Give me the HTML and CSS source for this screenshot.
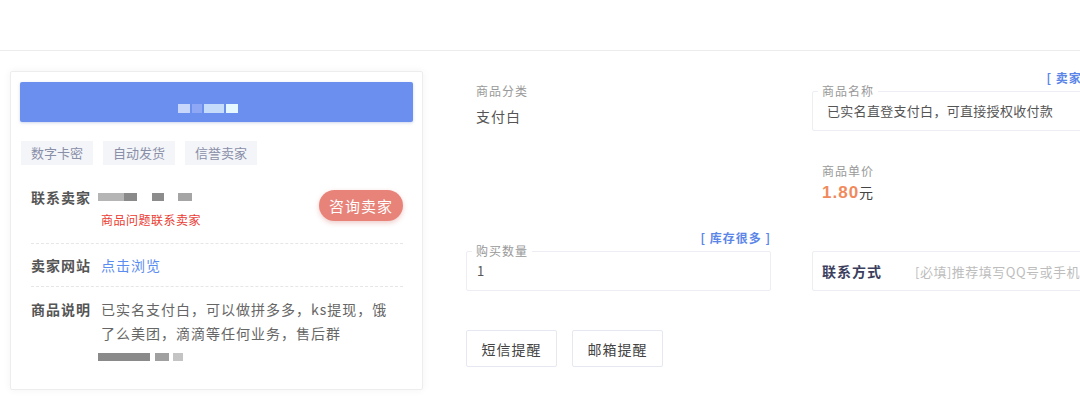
FILE: index.html
```html
<!DOCTYPE html>
<html lang="zh-CN">
<head>
<meta charset="utf-8">
<title>商品详情</title>
<link rel="stylesheet" href="styles.css">
</head>
<body>
<header class="topbar"></header>
<main class="main">
  <section class="card">
    <div class="card-title"><span class="blur-title"><i class="bt1"></i><i class="bt2"></i><i class="bt3"></i><i class="bt4"></i></span></div>
    <div class="tags">
      <span class="tag">数字卡密</span>
      <span class="tag">自动发货</span>
      <span class="tag">信誉卖家</span>
    </div>
    <div class="row row-contact">
      <span class="row-label">联系卖家</span>
      <div class="row-value">
        <div class="blur-line"><i class="b1"></i><i class="b2"></i><i class="b3"></i><i class="b4"></i></div>
        <div class="warn">商品问题联系卖家</div>
      </div>
      <button class="ask-btn">咨询卖家</button>
    </div>
    <div class="row row-site">
      <span class="row-label">卖家网站</span>
      <a class="link">点击浏览</a>
    </div>
    <div class="row row-desc">
      <span class="row-label">商品说明</span>
      <div class="desc">
        <p>已实名支付白，可以做拼多多，ks提现，饿了么美团，滴滴等任何业务，售后群</p>
        <div class="blur-line blur-desc"><i class="d1"></i><i class="d2"></i><i class="d3"></i></div>
      </div>
    </div>
  </section>

  <section class="form">
    <div class="cell cell-cat">
      <div class="f-label">商品分类</div>
      <div class="f-value">支付白</div>
    </div>
    <div class="cell cell-name">
      <div class="hint">[ 卖家信息 ]</div>
      <fieldset class="box">
        <legend>商品名称</legend>
        <div class="box-value name-value">已实名直登支付白，可直接授权收付款</div>
      </fieldset>
      <div class="price-block">
        <div class="f-label">商品单价</div>
        <div class="price"><span class="num">1.80</span><span class="unit">元</span></div>
      </div>
    </div>
    <div class="cell cell-qty">
      <div class="hint">[ 库存很多 ]</div>
      <fieldset class="box">
        <legend>购买数量</legend>
        <div class="box-value qty-value">1</div>
      </fieldset>
    </div>
    <div class="cell cell-contact">
      <div class="contact-box">
        <span class="contact-label">联系方式</span>
        <span class="placeholder">[必填]推荐填写QQ号或手机号</span>
      </div>
    </div>
    <div class="cell cell-btns">
      <button class="ghost-btn">短信提醒</button>
      <button class="ghost-btn">邮箱提醒</button>
    </div>
  </section>
</main>
</body>
</html>
```

FILE: styles.css
```css
* { box-sizing: border-box; }
html, body {
  margin: 0;
  padding: 0;
  background: #fff;
  overflow: hidden;
}
body {
  width: 1080px;
  height: 397px;
  font-family: "Noto Sans CJK SC", "Noto Sans", "Liberation Sans", sans-serif;
  color: #555;
}
.topbar {
  height: 51px;
  border-bottom: 1px solid #ececec;
}
.main {
  display: flex;
  align-items: flex-start;
  gap: 43px;
  padding: 20px 0 0 10px;
  width: 1200px;
}

/* left card */
.card {
  width: 413px;
  flex: none;
  border: 1px solid #ededed;
  border-radius: 2px;
  box-shadow: 0 0 8px rgba(0, 0, 0, 0.05);
  padding: 10px 9px 20px 9px;
}
.card-title {
  height: 40px;
  background: #6b8fee;
  border-radius: 2px;
  box-shadow: 0 1px 3px rgba(60, 90, 180, 0.25);
  display: flex;
  align-items: center;
  justify-content: center;
}
.blur-title {
  display: flex;
  align-items: flex-end;
  gap: 2px;
  height: 22px;
  margin-left: -18px;
  filter: blur(0.6px);
}
.blur-title i { display: block; height: 9px; }
.bt1 { width: 12px; background: #c9d6fb; }
.bt2 { width: 10px; background: #8fa8f5; }
.bt3 { width: 20px; background: #c6dcfb; }
.bt4 { width: 12px; background: #e6f8ff; }

.tags {
  display: flex;
  gap: 10px;
  margin-top: 19px;
  padding-left: 1px;
}
.tag {
  height: 24px;
  line-height: 24px;
  padding: 0 10px;
  background: #f3f5f9;
  color: #8a8fa8;
  font-size: 13px;
}

.row {
  display: flex;
  align-items: flex-start;
  margin: 0 10px 0 11px;
  font-size: 14px;
  line-height: 20px;
}
.row-label {
  width: 70px;
  flex: none;
  font-weight: 700;
  color: #555;
  letter-spacing: 1px;
}
.row-contact {
  padding: 22px 0 14px;
  border-bottom: 1px dashed #e6e6e6;
}
.row-value { flex: 1; }
.blur-line {
  display: flex;
  align-items: center;
  height: 20px;
  margin-left: -3px;
  filter: blur(0.5px);
}
.blur-line i { display: block; height: 8px; }
.b1 { width: 26px; background: #b5b5b5; margin-right: 0; }
.b2 { width: 13px; background: #8a8a8a; margin-right: 15px; }
.b3 { width: 12px; background: #8c8c8c; margin-right: 14px; }
.b4 { width: 14px; background: #a5a5a5; }
.warn {
  margin-top: 4px;
  font-size: 12px;
  line-height: 18px;
  color: #ea3b32;
  letter-spacing: 0.5px;
}
.ask-btn {
  flex: none;
  margin-top: 3px;
  width: 84px;
  height: 31px;
  border: 0;
  border-radius: 16px;
  background: #e8837a;
  color: #fff;
  font-family: inherit;
  font-size: 15px;
  letter-spacing: 1px;
  box-shadow: 0 2px 5px rgba(200, 90, 80, 0.3);
  padding: 0;
}
.row-site {
  padding: 11px 0 11px;
  border-bottom: 1px dashed #e6e6e6;
}
.link {
  color: #5b8cef;
  letter-spacing: 1px;
  cursor: pointer;
}
.row-desc {
  padding-top: 10px;
  line-height: 24px;
}
.desc {
  flex: 1;
  color: #666;
  letter-spacing: 1px;
}
.desc p { margin: 0; padding-right: 10px; }
.blur-desc { height: 24px; margin-left: -3px; }
.d1 { width: 52px; background: #8a8a8a; margin-right: 5px; }
.d2 { width: 14px; background: #a0a0a0; margin-right: 4px; }
.d3 { width: 10px; background: #c4c4c4; }

/* right form */
.form {
  display: grid;
  grid-template-columns: 305px 305px;
  column-gap: 41px;
  flex: none;
}
.f-label {
  font-size: 12px;
  line-height: 18px;
  color: #999;
  letter-spacing: 1px;
}
.f-value {
  margin-top: 6px;
  font-size: 14px;
  line-height: 20px;
  color: #555;
  letter-spacing: 1px;
}
.cell-cat { padding: 11px 0 0 10px; }
.hint {
  text-align: right;
  font-size: 12px;
  line-height: 14px;
  color: #5b86e8;
  font-weight: 700;
  letter-spacing: 1px;
  white-space: nowrap;
}
.box {
  margin: 0;
  padding: 0 5px 9px;
  border: 1px solid #eceef3;
  border-radius: 2px;
  min-width: 0;
}
.box legend {
  padding: 0 4px;
  font-size: 12px;
  line-height: 12px;
  color: #999;
  letter-spacing: 1px;
}
.box-value {
  padding-top: 4px;
  font-size: 13px;
  line-height: 20px;
  color: #555;
  white-space: nowrap;
  overflow: hidden;
}
.name-value { padding-left: 9px; letter-spacing: 0.3px; }
.qty-value { padding-left: 5px; }
.price-block { padding: 31px 0 0 10px; }
.price { line-height: 22px; }
.price .num {
  font-family: "Liberation Sans", Arial, sans-serif;
  font-weight: 700;
  font-size: 17px;
  letter-spacing: 1px;
  color: #f08a5d;
}
.price .unit {
  font-size: 14px;
  color: #444;
}
.cell-qty { padding-top: 27px; }
.cell-contact {
  display: flex;
  align-items: flex-end;
}
.contact-box {
  width: 100%;
  height: 40px;
  border: 1px solid #eceef3;
  border-radius: 2px;
  display: flex;
  align-items: center;
  padding-left: 9px;
  white-space: nowrap;
  overflow: hidden;
}
.contact-label {
  width: 93px;
  flex: none;
  font-size: 14px;
  font-weight: 700;
  color: #3c3e5e;
  letter-spacing: 1px;
}
.placeholder {
  font-size: 13px;
  color: #bdbdbd;
  letter-spacing: 0.5px;
}
.cell-btns {
  grid-column: 1 / 3;
  display: flex;
  gap: 15px;
  padding-top: 39px;
}
.ghost-btn {
  width: 91px;
  height: 37px;
  padding: 0;
  background: #fff;
  border: 1px solid #e6e8f1;
  border-radius: 2px;
  font-family: inherit;
  font-size: 14px;
  color: #444;
  letter-spacing: 1px;
}
```
